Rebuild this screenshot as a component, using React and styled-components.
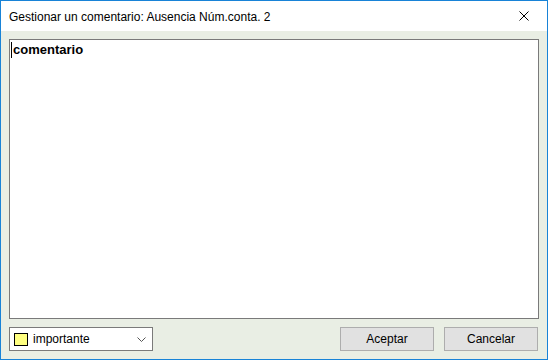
import React from 'react';
import styled, { createGlobalStyle } from 'styled-components';

const GlobalStyle = createGlobalStyle`
  html, body {
    margin: 0;
    padding: 0;
    background: #ffffff;
  }
  * {
    box-sizing: border-box;
  }
`;

const Window = styled.div`
  width: 548px;
  height: 360px;
  border: 1px solid #1883d7;
  display: flex;
  flex-direction: column;
  font-family: "Liberation Sans", Arial, sans-serif;
  font-size: 12px;
  color: #000;
`;

const TitleBar = styled.div`
  height: 30px;
  background: #ffffff;
  display: flex;
  align-items: center;
  justify-content: space-between;
  padding-left: 8px;
`;

const Title = styled.span`
  font-size: 12px;
  padding-top: 1px;
`;

const CloseButton = styled.div`
  width: 46px;
  height: 30px;
  display: flex;
  align-items: center;
  justify-content: center;
`;

const Body = styled.div`
  flex: 1;
  background: #e9eee4;
  padding: 8px;
  display: flex;
  flex-direction: column;
  gap: 8px;
`;

const Memo = styled.div`
  height: 280px;
  background: #ffffff;
  border: 1px solid #7a7a7a;
  padding: 2px 1px;
  font-weight: bold;
  font-size: 13px;
  line-height: 16px;
  display: flex;
  align-items: flex-start;
`;

const Caret = styled.span`
  display: inline-block;
  width: 1px;
  height: 16px;
  background: #000;
  margin-right: 1px;
`;

const Footer = styled.div`
  height: 24px;
  display: flex;
  align-items: center;
  padding-right: 1px;
`;

const Select = styled.div`
  width: 144px;
  height: 24px;
  background: #ffffff;
  border: 1px solid #7a7a7a;
  display: flex;
  align-items: center;
  padding: 0 6px 0 4px;
  gap: 5px;
`;

const Swatch = styled.span`
  width: 14px;
  height: 13px;
  background: ${(p) => p.color};
  border: 1px solid #000;
`;

const SelectText = styled.span`
  flex: 1;
  color: #000;
`;

const Spacer = styled.div`
  flex: 1;
`;

const Button = styled.div`
  width: 94px;
  height: 24px;
  background: #e1e1e1;
  border: 1px solid #adadad;
  display: flex;
  align-items: center;
  justify-content: center;
  margin-left: ${(p) => p.gap || 0}px;
`;

export default function App() {
  return (
    <>
      <GlobalStyle />
      <Window>
        <TitleBar>
          <Title>Gestionar un comentario: Ausencia Núm.conta. 2</Title>
          <CloseButton>
            <svg width="10" height="10" viewBox="0 0 10 10">
              <path d="M0.5 0.5 L9.5 9.5 M9.5 0.5 L0.5 9.5" stroke="#000" strokeWidth="1" />
            </svg>
          </CloseButton>
        </TitleBar>
        <Body>
          <Memo>
            <Caret />
            comentario
          </Memo>
          <Footer>
            <Select>
              <Swatch color="#ffff80" />
              <SelectText>importante</SelectText>
              <svg width="9" height="5" viewBox="0 0 9 5">
                <path d="M0.5 0.5 L4.5 4.5 L8.5 0.5" stroke="#555" fill="none" strokeWidth="1" />
              </svg>
            </Select>
            <Spacer />
            <Button>Aceptar</Button>
            <Button gap={10}>Cancelar</Button>
          </Footer>
        </Body>
      </Window>
    </>
  );
}
